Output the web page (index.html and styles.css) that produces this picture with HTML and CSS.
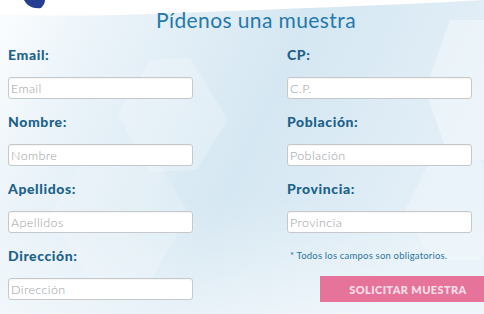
FILE: index.html
```html
<!DOCTYPE html>
<html lang="es">
<head>
<meta charset="utf-8">
<title>Pídenos una muestra</title>
<link rel="stylesheet" href="styles.css">
</head>
<body>
<div class="page">
  <svg class="backdrop" width="484" height="314" viewBox="0 0 484 314" aria-hidden="true">
    <defs>
      <linearGradient id="bg" x1="0" y1="0" x2="1" y2="0.3">
        <stop offset="0" stop-color="#fbfdfe"/>
        <stop offset="0.22" stop-color="#eaf3f9"/>
        <stop offset="0.6" stop-color="#d5e7f2"/>
        <stop offset="1" stop-color="#e3eff7"/>
      </linearGradient>
      <linearGradient id="fade" x1="0" y1="0" x2="0" y2="1">
        <stop offset="0" stop-color="#ffffff" stop-opacity="0"/>
        <stop offset="1" stop-color="#ffffff" stop-opacity="0.45"/>
      </linearGradient>
    </defs>
    <rect width="484" height="314" fill="url(#bg)"/>
    <rect y="200" width="484" height="114" fill="url(#fade)"/>
    <polygon points="150,60 190,58 228,120 196,170 150,172 118,115" fill="#ffffff" opacity="0.22"/>
    <polygon points="90,150 150,150 190,215 150,280 90,280 50,215" fill="#ffffff" opacity="0.18"/>
    <polygon points="450,20 500,20 530,90 500,160 450,160 425,90" fill="#ffffff" opacity="0.35"/>
    <polygon points="430,160 480,160 505,210 480,260 430,260 405,210" fill="#ffffff" opacity="0.25"/>
    <path d="M0,0 H484 V0 C380,6 250,10 150,14 C90,16 40,16 0,14 Z" fill="#ffffff"/>
    <path d="M22,2 C26,8 34,12 44,10 C48,6 49,2 48,0 H20 Z" fill="#ffffff"/>
    <path d="M24,0 C27,6 33,9 41,8 C44,5 45,2 45,0 Z" fill="#243f92"/>
  </svg>
  <h1 class="title">Pídenos una muestra</h1>
  <form class="form">
    <div class="field">
      <label class="label" for="email">Email:</label>
      <input class="input" id="email" placeholder="Email">
    </div>
    <div class="field">
      <label class="label" for="cp">CP:</label>
      <input class="input" id="cp" placeholder="C.P.">
    </div>
    <div class="field">
      <label class="label" for="nombre">Nombre:</label>
      <input class="input" id="nombre" placeholder="Nombre">
    </div>
    <div class="field">
      <label class="label" for="poblacion">Población:</label>
      <input class="input" id="poblacion" placeholder="Población">
    </div>
    <div class="field">
      <label class="label" for="apellidos">Apellidos:</label>
      <input class="input" id="apellidos" placeholder="Apellidos">
    </div>
    <div class="field">
      <label class="label" for="provincia">Provincia:</label>
      <input class="input" id="provincia" placeholder="Provincia">
    </div>
    <div class="field">
      <label class="label" for="direccion">Dirección:</label>
      <input class="input" id="direccion" placeholder="Dirección">
    </div>
    <div class="field submit-cell">
      <p class="note">* Todos los campos son obligatorios.</p>
      <button class="button" type="button">SOLICITAR MUESTRA</button>
    </div>
  </form>
</div>
</body>
</html>
```
FILE: styles.css
```css
* { box-sizing: border-box; }
html, body { margin: 0; padding: 0; }
body {
  width: 484px;
  height: 314px;
  overflow: hidden;
  font-family: "Lato", "Open Sans", sans-serif;
}
.page {
  position: relative;
  width: 484px;
  height: 314px;
  padding-top: 7px;
  z-index: 0;
  overflow: hidden;
}
.backdrop {
  position: absolute;
  left: 0;
  top: 0;
  z-index: -1;
}
.title {
  margin: 0 0 12px 0;
  height: 26px;
  line-height: 26px;
  text-align: center;
  padding-left: 28px;
  font-size: 21px;
  font-weight: 400;
  letter-spacing: 0.4px;
  color: #2479ac;
}
.form {
  display: grid;
  grid-template-columns: 185px 185px;
  column-gap: 94px;
  padding-left: 8px;
}
.field {
  display: flex;
  flex-direction: column;
  margin-bottom: 13px;
}
.label {
  height: 20px;
  line-height: 20px;
  margin-bottom: 12px;
  font-size: 14px;
  font-weight: 900;
  color: #1c6289;
  letter-spacing: 0.6px;
}
.input {
  height: 22px;
  width: 185px;
  border: 1px solid #c6c9cc;
  border-radius: 3px;
  background: #ffffff;
  padding: 0 2px;
  font-family: "Lato", sans-serif;
  font-size: 12.5px;
  font-weight: 300;
  letter-spacing: 0.4px;
  color: #555;
  box-shadow: inset 0 1px 1px rgba(0,0,0,0.04);
}
.input::placeholder { color: #9a9ea3; }
.submit-cell { align-items: flex-start; }
.note {
  margin: 0 0 0 3px;
  height: 20px;
  line-height: 20px;
  font-size: 9.5px;
  color: #2b73a0;
  letter-spacing: 0.2px;
  white-space: nowrap;
}
.button {
  margin-top: 10px;
  margin-left: 33px;
  width: 176px;
  flex: none;
  height: 26px;
  border: 0;
  border-radius: 0;
  background: #e6739a;
  color: #fbe0ea;
  font-family: "Lato", sans-serif;
  font-size: 11px;
  font-weight: 900;
  letter-spacing: 0.4px;
  padding: 0;
  text-align: center;
}
```
